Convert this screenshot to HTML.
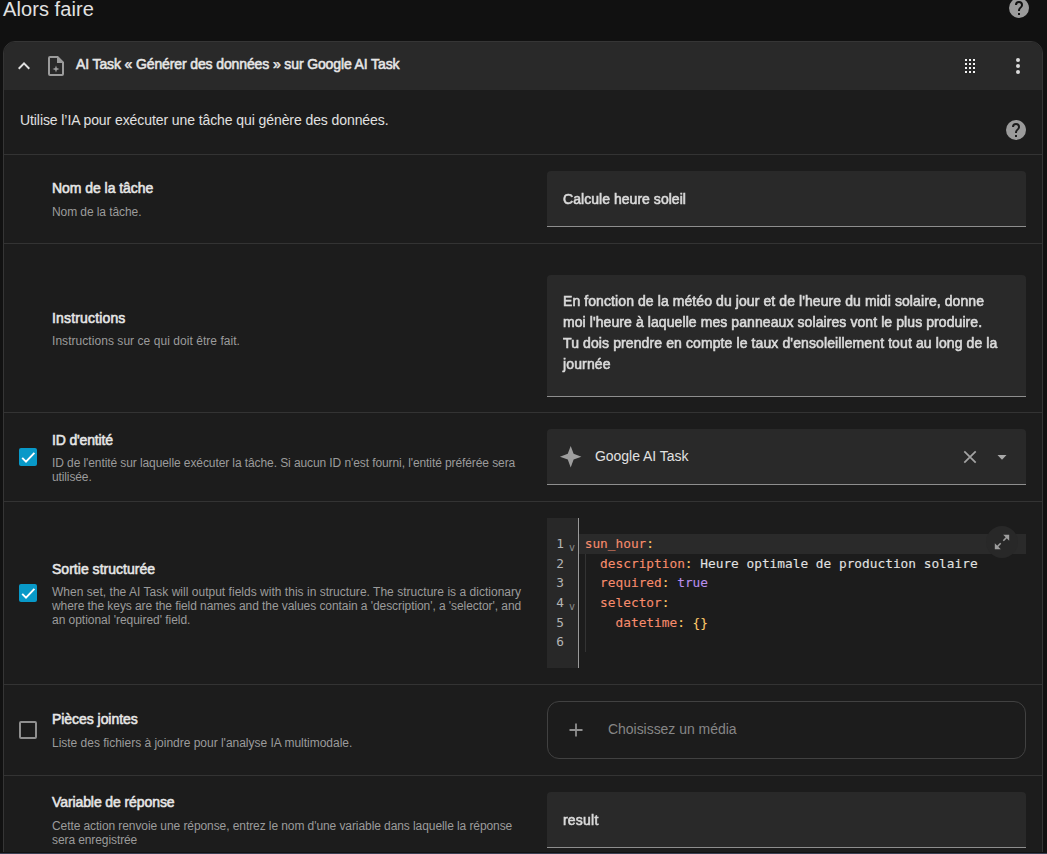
<!DOCTYPE html>
<html lang="fr">
<head>
<meta charset="utf-8">
<title>Alors faire</title>
<style>
html,body{margin:0;padding:0;}
body{width:1047px;height:854px;overflow:hidden;background:#111111;position:relative;
  font-family:"Liberation Sans",sans-serif;color:#e1e1e1;-webkit-font-smoothing:antialiased;}
.abs{position:absolute;white-space:nowrap;}
#title{left:3px;top:-3px;font-size:20px;line-height:24px;color:#e1e1e1;}
#card{position:absolute;left:3px;top:41px;width:1040px;height:830px;box-sizing:border-box;
  border:1px solid #353535;border-radius:12px;background:#1c1c1c;overflow:hidden;}
#head{position:absolute;left:0;top:0;width:100%;height:48px;background:#292929;}
.sep{position:absolute;left:4px;width:1038px;height:1px;background:#333333;}
.lbl{font-size:14px;line-height:20px;color:#e6e6e6;left:52px;-webkit-text-stroke:0.55px #e6e6e6;}
.sub{font-size:12px;line-height:14px;color:#9b9b9b;left:52px;}
.field{position:absolute;left:547px;width:479px;background:#292929;border-radius:4px 4px 0 0;
  border-bottom:1px solid #8e8e8e;box-sizing:border-box;}
.ftxt{will-change:transform;font-size:14px;line-height:21px;color:#dadada;left:563px;-webkit-text-stroke:0.6px #dadada;}
.cb{position:absolute;left:19px;width:18px;height:18px;box-sizing:border-box;border-radius:2px;}
.cb.on{background:#0899c8;}
.cb.off{border:2px solid #8f8f8f;}
svg{position:absolute;display:block;}
.mono{font-family:"DejaVu Sans Mono","Liberation Mono",monospace;font-size:12.8px;line-height:19.6px;}
.med{color:#e6e6e6;-webkit-text-stroke:0.55px #e6e6e6;}
.k{color:#f78c6c}.m{color:#ffcb6b}.kw{color:#b98fec}
/*fit*/
#title{letter-spacing:0.079px}
#htitle{letter-spacing:-0.121px}
#desc{letter-spacing:-0.085px}
#l1{letter-spacing:-0.044px}
#s1{letter-spacing:-0.082px}
#l2{letter-spacing:0.159px}
#s2{letter-spacing:0.049px}
#l3{letter-spacing:-0.155px}
#s3a{letter-spacing:-0.091px}
#s3b{letter-spacing:-0.121px}
#l4{letter-spacing:0.022px}
#s4a{letter-spacing:0.021px}
#s4b{letter-spacing:-0.069px}
#s4c{letter-spacing:-0.033px}
#l5{letter-spacing:-0.049px}
#s5{letter-spacing:-0.014px}
#l6{letter-spacing:-0.094px}
#s6a{letter-spacing:-0.081px}
#s6b{letter-spacing:-0.095px}
#f1{letter-spacing:0.041px}
#f2a{letter-spacing:0.087px}
#f2b{letter-spacing:0.084px}
#f2c{letter-spacing:0.107px}
#f2d{letter-spacing:0.142px}
#f3{letter-spacing:-0.037px}
#media{letter-spacing:-0.035px}
#f6{letter-spacing:0.211px}
/*endfit*/
</style>
</head>
<body>
<div id="title" class="abs">Alors faire</div>
<svg style="left:1007px;top:-4px" width="24" height="24" viewBox="0 0 24 24"><path fill="#9b9b9b" d="M15.07,11.25L14.17,12.17C13.45,12.89 13,13.5 13,15H11V14.5C11,13.39 11.45,12.39 12.17,11.67L13.41,10.41C13.78,10.05 14,9.55 14,9C14,7.89 13.1,7 12,7A2,2 0 0,0 10,9H8A4,4 0 0,1 12,5A4,4 0 0,1 16,9C16,9.88 15.64,10.67 15.07,11.25M13,19H11V17H13M12,2A10,10 0 0,0 2,12A10,10 0 0,0 12,22A10,10 0 0,0 22,12C22,6.47 17.5,2 12,2Z"/></svg>

<div id="card"><div id="head"></div></div>

<!-- header -->
<svg style="left:12px;top:54px" width="24" height="24" viewBox="0 0 24 24"><path fill="#e1e1e1" d="M7.41,15.41L12,10.83L16.59,15.41L18,14L12,8L6,14L7.41,15.41Z"/></svg>
<svg style="left:44px;top:54px" width="24" height="24" viewBox="0 0 24 24"><path fill="#9b9b9b" d="M14,2H6A2,2 0 0,0 4,4V20A2,2 0 0,0 6,22H18A2,2 0 0,0 20,20V8L14,2M18,20H6V4H13V9H18V20Z"/><path fill="#9b9b9b" d="M12,11.5L12.9,14.1L15.5,15L12.9,15.9L12,18.5L11.1,15.9L8.5,15L11.1,14.1Z"/></svg>
<div class="abs med" id="htitle" style="left:76px;top:54px;font-size:14px;line-height:20px;">AI Task « Générer des données » sur Google AI Task</div>
<svg style="left:958px;top:54px" width="24" height="24" viewBox="0 0 24 24"><g fill="#f2f2f2"><rect x="7" y="5" width="2" height="2"/><rect x="11" y="5" width="2" height="2"/><rect x="15" y="5" width="2" height="2"/><rect x="7" y="9" width="2" height="2"/><rect x="11" y="9" width="2" height="2"/><rect x="15" y="9" width="2" height="2"/><rect x="7" y="13" width="2" height="2"/><rect x="11" y="13" width="2" height="2"/><rect x="15" y="13" width="2" height="2"/><rect x="7" y="17" width="2" height="2"/><rect x="11" y="17" width="2" height="2"/><rect x="15" y="17" width="2" height="2"/></g></svg>
<svg style="left:1006px;top:54px" width="24" height="24" viewBox="0 0 24 24"><path fill="#dcdcdc" d="M12,16A2,2 0 0,1 14,18A2,2 0 0,1 12,20A2,2 0 0,1 10,18A2,2 0 0,1 12,16M12,10A2,2 0 0,1 14,12A2,2 0 0,1 12,14A2,2 0 0,1 10,12A2,2 0 0,1 12,10M12,4A2,2 0 0,1 14,6A2,2 0 0,1 12,8A2,2 0 0,1 10,6A2,2 0 0,1 12,4Z"/></svg>

<!-- description -->
<div class="abs" id="desc" style="left:20px;top:110px;font-size:14px;line-height:20px;color:#e1e1e1;">Utilise l’IA pour exécuter une tâche qui génère des données.</div>
<svg style="left:1004px;top:118px" width="24" height="24" viewBox="0 0 24 24"><path fill="#9b9b9b" d="M15.07,11.25L14.17,12.17C13.45,12.89 13,13.5 13,15H11V14.5C11,13.39 11.45,12.39 12.17,11.67L13.41,10.41C13.78,10.05 14,9.55 14,9C14,7.89 13.1,7 12,7A2,2 0 0,0 10,9H8A4,4 0 0,1 12,5A4,4 0 0,1 16,9C16,9.88 15.64,10.67 15.07,11.25M13,19H11V17H13M12,2A10,10 0 0,0 2,12A10,10 0 0,0 12,22A10,10 0 0,0 22,12C22,6.47 17.5,2 12,2Z"/></svg>

<div class="sep" style="top:154px"></div>
<div class="sep" style="top:243px"></div>
<div class="sep" style="top:412px"></div>
<div class="sep" style="top:501px"></div>
<div class="sep" style="top:684px"></div>
<div class="sep" style="top:775px"></div>

<!-- row 1 : Nom de la tâche -->
<div class="abs lbl" id="l1" style="top:178px">Nom de la tâche</div>
<div class="abs sub" id="s1" style="top:205px">Nom de la tâche.</div>
<div class="field" style="top:171px;height:56px"></div>
<div class="abs ftxt" id="f1" style="top:189px">Calcule heure soleil</div>

<!-- row 2 : Instructions -->
<div class="abs lbl" id="l2" style="top:308px">Instructions</div>
<div class="abs sub" id="s2" style="top:334px">Instructions sur ce qui doit être fait.</div>
<div class="field" style="top:275px;height:122px"></div>
<div class="abs ftxt" id="f2a" style="top:291px">En fonction de la météo du jour et de l'heure du midi solaire, donne</div>
<div class="abs ftxt" id="f2b" style="top:312px">moi l'heure à laquelle mes panneaux solaires vont le plus produire.</div>
<div class="abs ftxt" id="f2c" style="top:333px">Tu dois prendre en compte le taux d'ensoleillement tout au long de la</div>
<div class="abs ftxt" id="f2d" style="top:354px">journée</div>

<!-- row 3 : ID d'entité -->
<div class="cb on" style="top:448px"><svg style="left:0;top:0" width="18" height="18" viewBox="0 0 18 18"><path d="M3.2,9.8L7,13.6L15.4,4.9" fill="none" stroke="#ffffff" stroke-width="1.9"/></svg></div>
<div class="abs lbl" id="l3" style="top:430px">ID d'entité</div>
<div class="abs sub" id="s3a" style="top:456px">ID de l'entité sur laquelle exécuter la tâche. Si aucun ID n'est fourni, l'entité préférée sera</div>
<div class="abs sub" id="s3b" style="top:470px">utilisée.</div>
<div class="field" style="top:429px;height:56px"></div>
<svg style="left:559.1px;top:445.4px" width="23.4" height="23.4" viewBox="0 0 24 24"><path fill="#9e9e9e" d="M12,1L9,9L1,12L9,15L12,23L15,15L23,12L15,9L12,1Z"/></svg>
<div class="abs" id="f3" style="top:446px;left:595px;font-size:14px;line-height:21px;color:#e1e1e1">Google AI Task</div>
<svg style="left:958px;top:445px" width="24" height="24" viewBox="0 0 24 24"><path d="M6.3,6.3L17.7,17.7M17.7,6.3L6.3,17.7" fill="none" stroke="#a3a3a3" stroke-width="1.7"/></svg>
<svg style="left:990px;top:445px" width="24" height="24" viewBox="0 0 24 24"><path fill="#a9a9a9" d="M7.5,10.1L12,14.8L16.5,10.1Z"/></svg>

<!-- row 4 : Sortie structurée -->
<div class="cb on" style="top:584px"><svg style="left:0;top:0" width="18" height="18" viewBox="0 0 18 18"><path d="M3.2,9.8L7,13.6L15.4,4.9" fill="none" stroke="#ffffff" stroke-width="1.9"/></svg></div>
<div class="abs lbl" id="l4" style="top:559px">Sortie structurée</div>
<div class="abs sub" id="s4a" style="top:584.5px">When set, the AI Task will output fields with this in structure. The structure is a dictionary</div>
<div class="abs sub" id="s4b" style="top:598.5px">where the keys are the field names and the values contain a 'description', a 'selector', and</div>
<div class="abs sub" id="s4c" style="top:612.5px">an optional 'required' field.</div>

<!-- code editor -->
<div id="gutter" style="position:absolute;left:547px;top:518px;width:31px;height:150px;background:#282828;border-right:1px solid #9a9a9a;"></div>
<div id="activeline" style="position:absolute;left:579px;top:534px;width:447px;height:20px;background:#2a2a2a;"></div>
<div id="indent" style="position:absolute;left:585px;top:554px;width:1px;height:98px;background:#333333;"></div>
<div id="fsbtn" style="position:absolute;left:986px;top:526px;width:32px;height:32px;border-radius:16px;background:#282828;"></div>
<svg style="left:992px;top:532px" width="20" height="20" viewBox="0 0 20 20"><g fill="#9e9e9e" stroke="#9e9e9e"><path d="M17.2,2.8H11.2L17.2,8.8Z" stroke="none"/><path d="M15,5L11.3,8.7" stroke-width="1.6" fill="none"/><path d="M2.8,17.2H8.8L2.8,11.2Z" stroke="none"/><path d="M5,15L8.7,11.3" stroke-width="1.6" fill="none"/></g></svg>
<div class="abs mono ln" style="left:547px;top:534.2px;width:17px;text-align:right;color:#b4b4b4">1<br>2<br>3<br>4<br>5<br>6</div>
<div class="abs mono" style="left:569px;top:541.6px;font-size:10px;line-height:12px;color:#8c8c8c">v</div>
<div class="abs mono" style="left:569px;top:601.1px;font-size:10px;line-height:12px;color:#8c8c8c">v</div>
<div class="abs mono" id="code" style="left:584.7px;top:534.2px;-webkit-text-stroke:0.1px;color:#e1e1e1;white-space:pre"><span class="k">sun_hour</span><span class="m">:</span>
  <span class="k">description</span><span class="m">:</span> Heure optimale de production solaire
  <span class="k">required</span><span class="m">:</span> <span class="kw">true</span>
  <span class="k">selector</span><span class="m">:</span>
    <span class="k">datetime</span><span class="m">:</span> <span class="m">{}</span>
</div>

<!-- row 5 : Pièces jointes -->
<div class="cb off" style="top:721px"></div>
<div class="abs lbl" id="l5" style="top:709px">Pièces jointes</div>
<div class="abs sub" id="s5" style="top:735.5px">Liste des fichiers à joindre pour l'analyse IA multimodale.</div>
<div style="position:absolute;left:547px;top:701px;width:479px;height:58px;box-sizing:border-box;border:1px solid #414141;border-radius:12px;"></div>
<svg style="left:564px;top:718px" width="24" height="24" viewBox="0 0 24 24"><path d="M12,5.5V18.5M5.5,12H18.5" fill="none" stroke="#8f8f8f" stroke-width="1.8"/></svg>
<div class="abs" id="media" style="left:608px;top:719px;font-size:14px;line-height:20px;color:#868686">Choisissez un média</div>

<!-- row 6 : Variable de réponse -->
<div class="abs lbl" id="l6" style="top:792px">Variable de réponse</div>
<div class="abs sub" id="s6a" style="top:819px">Cette action renvoie une réponse, entrez le nom d'une variable dans laquelle la réponse</div>
<div class="abs sub" id="s6b" style="top:833px">sera enregistrée</div>
<div class="field" style="top:792px;height:56px"></div>
<div class="abs ftxt" id="f6" style="top:810px">result</div>

<!-- bottom strip -->
<div style="position:absolute;left:0;top:852px;width:1047px;height:1px;background:#111111"></div>
<div style="position:absolute;left:0;top:853px;width:1047px;height:1px;background:#3a4053"></div>
</body>
</html>
